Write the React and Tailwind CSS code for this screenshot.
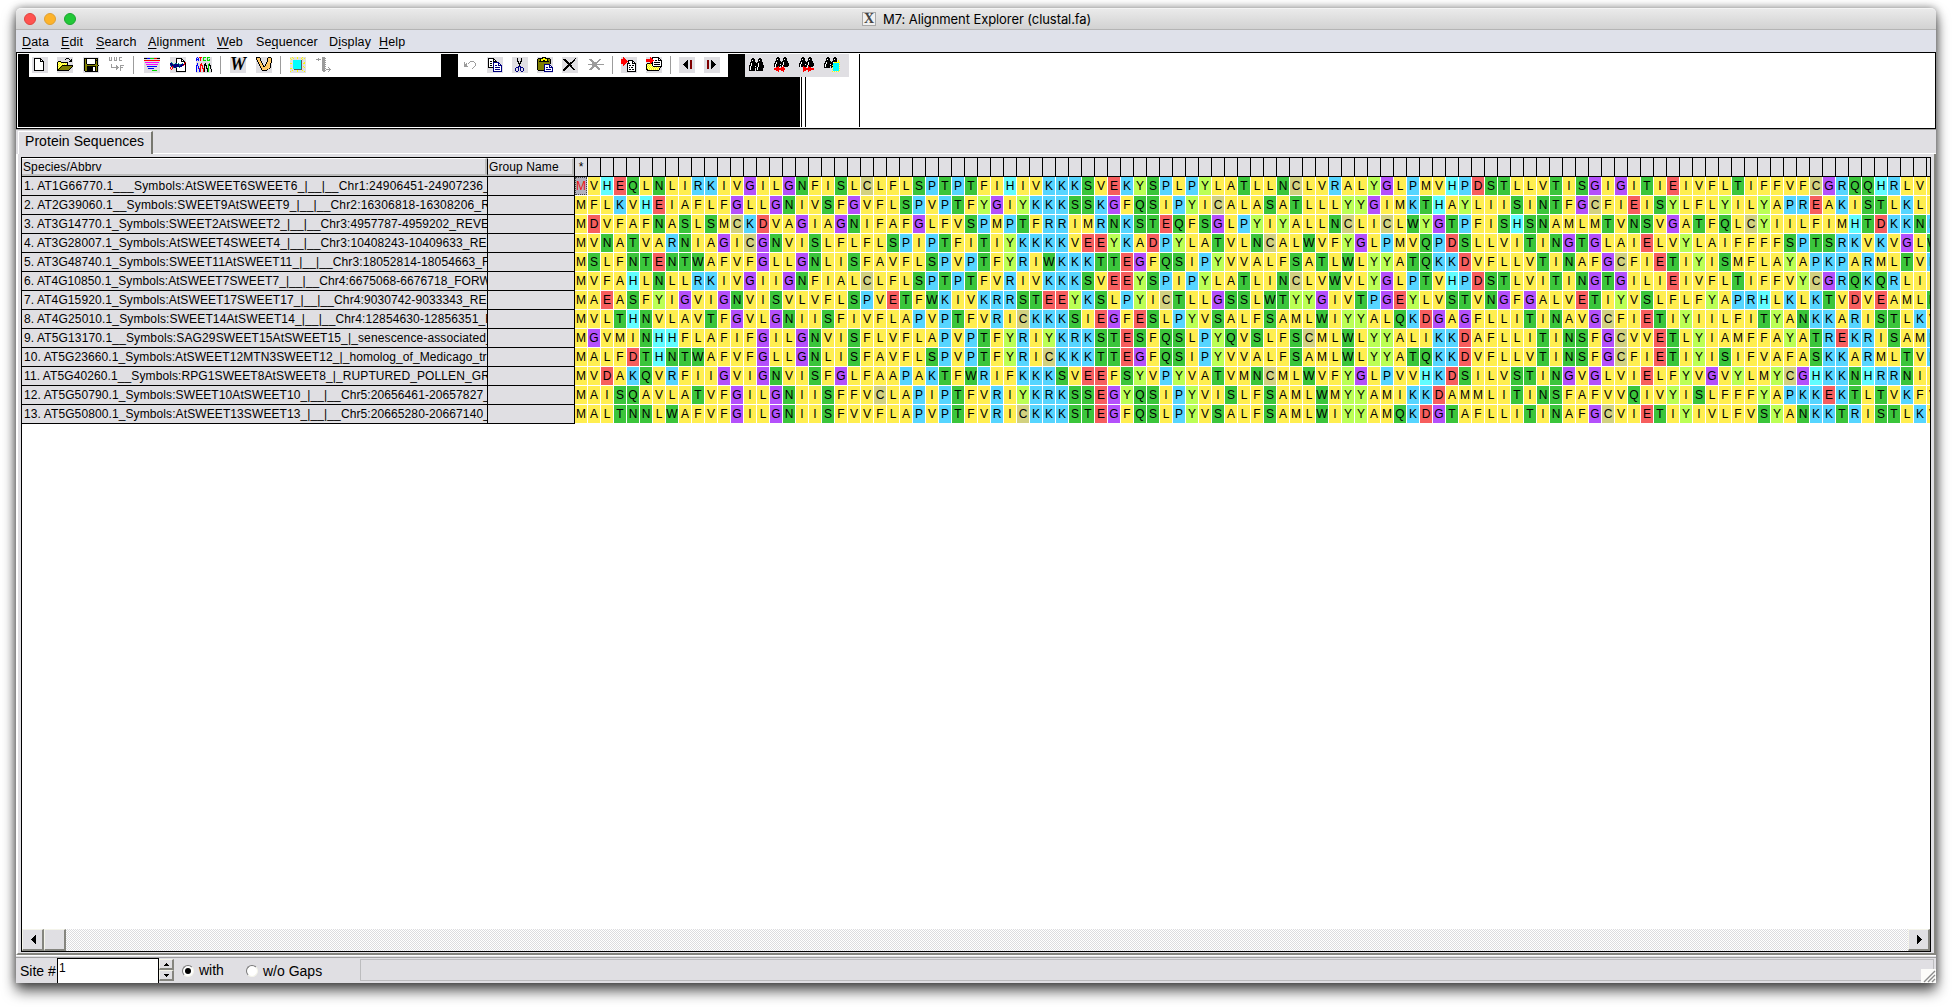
import React from "react";

const PALETTE = {
  k: "#000000", w: "#ffffff", r: "#ff0000", b: "#0000ff", n: "#000080", y: "#ffff00",
  o: "#808000", m: "#ff00ff", c: "#00ffff", g: "#00e000", s: "#9c9c9c", d: "#800000",
  f: "#ffc864", p: "#ffff90", t: "#008080", h: "#5a5a5a", l: "#c8c8c8",
};

const ICONS = {
  doc: ["", "..kkkkkkk", "..kwwwwwkk", "..kwwwwwkwk", "..kwwwwwkkkk", "..kwwwwwwwwk", "..kwwwwwwwwk", "..kwwwwwwwwk", "..kwwwwwwwwk", "..kwwwwwwwwk", "..kwwwwwwwwk", "..kwwwwwwwwk", "..kwwwwwwwwk", "..kkkkkkkkkk"],
  open: ["", ".........kkk", "........k...k.k", ".............kk", ".kkk........kkk", "kypykkkkkkk", "kpypypypypk", "kypypypypyk", "kpypykkkkkkkkkkk", "kypykooooooooook", "kpykooooooooook", "kykooooooooook", "kkooooooooook", "kkkkkkkkkkkk"],
  save: ["", ".kkkkkkkkkkkkkk", ".kokwwwwwwwwkok", ".kokwwwwwwwwkkk", ".kokwwwwwwwwkok", ".kokwwwwwwwwkok", ".kokwwwwwwwwkok", ".kookkkkkkkkook", ".koooooooooooook", ".kookkkkkkkkkok", ".kookkkkkkwwkok", ".kookkkkkkwwkok", ".kookkkkkkwwkok", ".kookkkkkkwwkok", "..kkkkkkkkkkkkk"],
  uuc: ["s.s..s.s..sss", "s.s..s.s..s", "s.s..s.s..s", "sss..sss..sss", "", "", "", "..s", "..s....s...ssss", "..s....ss..s", "..ssssssss.sss", ".......ss..s", ".......s...s", "...........s"],
  align: ["", "kkkbbbggggrrrkkk", "", "rrrrrrrrrrrrrrrr", "", ".mmmmmmmmmmmmmm", "", "..mmmmmmmmmmmm", "", "...bbbbbbbbbb", "", "....bbbbbb", "", "........ggggg"],
  muscle: ["", "......kkkkkk", "......kwwwwkk", "......kwwwwkwk", "......kwwwwkkkk", ".t....kwwwwwwwkr", "nnt..ttwtwwwtwrk", "nnntnnnnnttnnnrk", "tnnnnnnnntnnnrwk", ".nrnnnnnnnnnwwwk", "r.rtnntwwtwwwwwk", "r.r...kwwwwwwwwk", ".r....kwwwwwwwwk", "......kwwwwwwwwk", "......kkkkkkkkkk"],
  trace: [".b.rrr.ggg.ggg", "b.b.r..g...g", "bbb.r..g...g.g", "b.b.r..ggg.ggg", "", "", ".b...r...k...g", ".b..rr..kk..gk", "bb..rrr.kkk.gkk", "b.b.r.r.k.k.g.k", "b.b.r.r.k.k.g.k", "b.brr.rrk.kkg.k", "b..br..rk..kg..k", "b..br..rk..kg..k", "b..br..rk..kg..k"],
  arm: ["kkkk........kkk", "kfffk......kfffk", "kfffk......kfffk", ".kffk......kfffk", ".kfffk.....kfffk", "..kffk....kffffk", "..kfffk...kfffk", "...kffk..kffffk", "...kfffk.kffffk", "....kffkkfffffk", "....kfffffffffk", ".....kfffffffk", ".....kfffffk", "......kkkkk"],
  sun: ["..y....y....y", "y..y...y...y..y", ".y..........y", "...cccccccch", "...cccccccch", "...cccccccch..y", "yy.cccccccch.yy", "...cccccccch", "...cccccccch", "...cccccccch.y", "...cccccccch..y", "yy.cccccccch", "....hhhhhhhh", "..y....y....y", "y......y......y"],
  steps: ["......sss", "..s...ssss", "sssss.sss", "..s...ssss", "......sss", "......ssss", "......sss", "......ssss", "......sss", "......ssss", "......sss...s", "......ssss...s", "......sss.sssss", "......ssss...s", ".......ss...s"],
  undo: ["", "", "", "", "......ssss", "s....s....s", "s.s.s......s", "sss........s", "sss........s", "ssss......s", ".........s", "........s"],
  copy: ["", ".kkkkkk", ".kwwwwkk", ".kwwwwkwk", ".kwkkwkkkk", ".kwwwwnnnnnn", ".kwkkwnwwwwnn", ".kwwwwnwwwwnwn", ".kwkkwnwnnwnnnn", ".kwwwwnwwwwwwwn", ".kkkkknwnnnnnwn", "......nwwwwwwwn", "......nwnnnnnwn", "......nwwwwwwwn", "......nnnnnnnnn"],
  cut: ["", ".....k...k", ".....k...k", ".....k...k", ".....kk.kk", "......k.k", "......kkk", ".......k", ".......k", "......nnn", "....nnn.nnn", "...n..n.n..n", "...n..n.n..n", "...n..n.n..n", "....nn...nn"],
  paste: [".....kkkk", ".kkkkkyykkkkk", "kookyyyyyykook", "kookyykkyykook", "kokkkkkkkkkkok", "kooooooooooook", "kooooooooooook", "koooooonnnnnn", "koooooonwwwwnn", "koooooonwwwwnwn", "koooooonwnnwnnnn", "koooooonwwwwwwwn", "koooooonwnnnnnwn", ".kkkkkknwwwwwwwn", ".......nnnnnnnnn"],
  cross: ["", ".............k", ".kkk........k", "..kkk......kk", "...kkk....kk", "....kkk.kkk", ".....kkkkk", "......kkk", ".....kkkkk", "....kkk.kk", "...kkk...kk", "..kkk.....kk", ".kkk.......kk", ".kk"],
  crossOff: ["", "", ".sss.......ss", "..sss.....ss", "...sss...ss", "....ssssss", "....sssss", "ssssssssssssssss", "....sssss", "....ssssss", "...sss..sss", "..sss....sss", ".sss......ss"],
  insDoc: ["..r", "..rr", "rrrrr", "rrrrrr.kkkkk", "rrrrrrrkwwwkk", "rrrrrr.kwwwkwk", "rrrrr.kkkwwkkkk", "..rr..kwwwwwwwk", "..r...kwkkwkkwk", "......kwwwwwwwk", "......kwkwkkwwk", "......kwwwwwwwk", "......kwkkwkkwk", "......kwwwwwwwk", "......kkkkkkkkk"],
  insFolder: ["....r.kkkkkkk", "....rrkwwwwwkk", "rrrrrrrwwwwwkwk", "rrrrrrrrwkkwkkkk", "rrrrrrrwwwwwwwwk", "....rrkwkkkkkkwk", ".kkkrkkwwwwwwwwk", "kypyypkwkkkkkkwk", "kpypypkwwwwwwwwk", "kypypypkkkkkkkkk", "kpypypypypypypk", "kypypypypypypk", "kkpypypypypypk", ".kkkkkkkkkkkk"],
  prev: ["", "", "", "........k..dd", ".......kk..dd", "......kkk..dd", ".....kkkk..dd", "....kkkkk..dd", ".....kkkk..dd", "......kkk..dd", ".......kk..dd", "........k..dd"],
  next: ["", "", "", "...dd..k", "...dd..kk", "...dd..kkk", "...dd..kkkk", "...dd..kkkkk", "...dd..kkkk", "...dd..kkk", "...dd..kk", "...dd..k"],
  find: ["", "...kk.....kk", "..kkkk...kkkk", "..kwkk...kwkk", "..kkkk...kkkk", ".kkkkkk.kkkkkk", ".kwkkkkkkwkkkk", ".kwkkkkkkwkkkk", "kkwkkkkkkwkkkkk", "kwkkkkwkkwkkkkk", "kwkkkkkkwkkkkkk", "kwkkkk.kwkkkkk", "kwkkkk.kwkkkkk", "kkkkkk.kkkkkkk"],
  findPrev: ["...kk.....kk", "..kkkk...kkkk", "..kwkk...kwkk", "..kkkk...kkkk", ".kkkkkk.kkkkkk", ".kwkkkkkkwkkkk", "kkwkkkkkkwkkkkk", "kwkkkkwkkwkkkkk", "kwkkkkkkwkkkkkk", "kwkkrk.kwrkkkk", "..rrr..rrr", "rrrrrrrrrrr", "rrrrrrrrrrr", "..rrr..rrr", "....r....r"],
  findNext: ["...kk.....kk", "..kkkk...kkkk", "..kwkk...kwkk", "..kkkk...kkkk", ".kkkkkk.kkkkkk", ".kwkkkkkkwkkkk", "kkwkkkkkkwkkkkk", "kwkkkkwkkwkkkkk", "kwkkkkkkwkkkkkk", "kwkkrkkkwrkkkk", "....rrr..rrr", "....rrrrrrrrrrr", "....rrrrrrrrrrr", "....rrr..rrr", "....r....r"],
  findMark: ["...kk.....kk", "..kkkk...kkkk", "..kwkk...kwkk", "..kkkk...kkkk.y", ".kkkkkk.kkkkk.y", ".kwkkkkkkwyyyyyy", "kkwkkkkkkcccccc", "kwkkkkwkkccccccy", "kwkkkkkkycccccc", "kwkkkk.kkccccccy", "kkkkkk.kycccccc", ".........ccccccy", "........ycccccc", ".........ccccccy", "........y.y.y.y"],
};

function PixelIcon({ name }) {
  return (
    <svg width="16" height="16" viewBox="0 0 16 16" shapeRendering="crispEdges" className="block shrink-0">
      {ICONS[name].flatMap((row, y) =>
        [...row].map((ch, x) =>
          PALETTE[ch] ? <rect key={x + "-" + y} x={x} y={y} width="1" height="1" fill={PALETTE[ch]} /> : null
        )
      )}
    </svg>
  );
}

function Tool({ name, flat, className = "" }) {
  return (
    <div className={"h-4 w-4 shrink-0 " + (flat ? "" : "bg-[#e0dfe3] ") + className}>
      {name === "web" ? (
        <div className="-mx-1 text-center font-['Liberation_Serif',serif] text-[18px] leading-[15px] font-bold italic">W</div>
      ) : (
        <PixelIcon name={name} />
      )}
    </div>
  );
}

const Sep = ({ className }) => <div className={"-mt-px h-[18px] w-px shrink-0 bg-[#9c9c9c] " + className} />;

const RESIDUE = {
  A: "bg-[#ffee50]", F: "bg-[#ffee50]", I: "bg-[#ffee50]", L: "bg-[#ffee50]", M: "bg-[#ffee50]", V: "bg-[#ffee50]",
  N: "bg-[#3bc53b]", Q: "bg-[#3bc53b]", S: "bg-[#3bc53b]", T: "bg-[#3bc53b]", W: "bg-[#3bc53b]",
  K: "bg-[#56d5ff]", R: "bg-[#56d5ff]", P: "bg-[#56d5ff]",
  D: "bg-[#f65e5e]", E: "bg-[#f65e5e]",
  G: "bg-[#b450fb]", H: "bg-[#62fdff]", Y: "bg-[#bbff55]", C: "bg-[#d2d180]",
};

const ROWS = [
  ["1. AT1G66770.1___Symbols:AtSWEET6SWEET6_|__|__Chr1:24906451-24907236_F", "tracking-[0.2px]", "MVHEQLNLIRKIVGILGNFISLCLFLSPTPTFIHI", "VKKKSVEKYSPLPYLATLLNCLVRALYGLPMVHPD", "STLLVTISGIGITIEIVFLTIFFVFCGRQQHRLVI"],
  ["2. AT2G39060.1__Symbols:SWEET9AtSWEET9_|__|__Chr2:16306818-16308206_R", "tracking-[0.17px]", "MFLKVHEIAFLFGLLGNIVSFGVFLSPVPTFYGIY", "KKKSSKGFQSIPYICALASATLLLYYGIMKTHAYL", "IISINTFGCFIEISYLFLYILYAPREAKISTLKLI"],
  ["3. AT3G14770.1_Symbols:SWEET2AtSWEET2_|__|__Chr3:4957787-4959202_REVE", "tracking-[0.1px]", "MDVFAFNASLSMCKDVAGIAGNIFAFGLFVSPMPT", "FRRIMRNKSTEQFSGLPYIYALLNCLICLWYGTPF", "ISHSNAMLMTVNSVGATFQLCYIILFIMHTDKKNK"],
  ["4. AT3G28007.1_Symbols:AtSWEET4SWEET4_|__|__Chr3:10408243-10409633_RE", "tracking-[0.1px]", "MVNATVARNIAGICGNVISLFLFLSPIPTFITIYK", "KKKVEEYKADPYLATVLNCALWVFYGLPMVQPDSL", "LVITINGTGLAIELVYLAIFFFFSPTSRKVKVGLW"],
  ["5. AT3G48740.1_Symbols:SWEET11AtSWEET11_|__|__Chr3:18052814-18054663_F", "tracking-[0.11px]", "MSLFNTENTWAFVFGLLGNLISFAVFLSPVPTFYR", "IWKKKTTEGFQSIPYVVALFSATLWLYYATQKKDV", "FLLVTINAFGCFIETIYISMFLAYAPKPARMLTVK"],
  ["6. AT4G10850.1_Symbols:AtSWEET7SWEET7_|__|__Chr4:6675068-6676718_FORW", "tracking-[0.07px]", "MVFAHLNLLRKIVGIIGNFIALCLFLSPTPTFVRI", "VKKKSVEEYSPIPYLATLINCLVWVLYGLPTVHPD", "STLVITINGTGILIEIVFLTIFFVYCGRQKQRLII"],
  ["7. AT4G15920.1_Symbols:AtSWEET17SWEET17_|__|__Chr4:9030742-9033343_RE", "tracking-[0.1px]", "MAEASFYIGVIGNVISVLVFLSPVETFWKIVKRRS", "TEEYKSLPYICTLLGSSLWTYYGIVTPGEYLVSTV", "NGFGALVETIYVSLFLFYAPRHLKLKTVDVEAMLN"],
  ["8. AT4G25010.1_Symbols:SWEET14AtSWEET14_|__|__Chr4:12854630-12856351_R", "tracking-[0.13px]", "MVLTHNVLAVTFGVLGNIISFIVFLAPVPTFVRIC", "KKKSIEGFESLPYVSALFSAMLWIYYALQKDGAGF", "LLITINAVGCFIETIYIILFITYANKKARISTLKV"],
  ["9. AT5G13170.1__Symbols:SAG29SWEET15AtSWEET15_|_senescence-associated_", "tracking-[0.13px]", "MGVMINHHFLAFIFGILGNVISFLVFLAPVPTFYR", "IYKRKSTESFQSLPYQVSLFSCMLWLYYALIKKDA", "FLLITINSFGCVVETLYIAMFFAYATREKRISAMK"],
  ["10. AT5G23660.1_Symbols:AtSWEET12MTN3SWEET12_|_homolog_of_Medicago_tr", "tracking-[0.08px]", "MALFDTHNTWAFVFGLLGNLISFAVFLSPVPTFYR", "ICKKKTTEGFQSIPYVVALFSAMLWLYYATQKKDV", "FLLVTINSFGCFIETIYISIFVAFASKKARMLTVK"],
  ["11. AT5G40260.1__Symbols:RPG1SWEET8AtSWEET8_|_RUPTURED_POLLEN_GR", "tracking-[0.1px]", "MVDAKQVRFIIGVIGNVISFGLFAAPAKTFWRIFK", "KKSVEEFSYVPYVATVMNCMLWVFYGLPVVHKDSI", "LVSTINGVGLVIELFYVGVYLMYCGHKKNHRRNII"],
  ["12. AT5G50790.1_Symbols:SWEET10AtSWEET10_|__|__Chr5:20656461-20657827_", "tracking-[0.1px]", "MAISQAVLATVFGILGNIISFFVCLAPIPTFVRIY", "KRKSSEGYQSIPYVISLFSAMLWMYYAMIKKDAMM", "LITINSFAFVVQIVYISLFFFYAPKKEKTLTVKFV"],
  ["13. AT5G50800.1_Symbols:AtSWEET13SWEET13_|__|__Chr5:20665280-20667140_", "tracking-[0.1px]", "MALTNNLWAFVFGILGNIISFVVFLAPVPTFVRIC", "KKKSTEGFQSLPYVSALFSAMLWIYYAMQKDGTAF", "LLITINAFGCVIETIYIVLFVSYANKKTRISTLKV"],
];

const MENU = [
  ["", "D", "ata", "w-[39px]"], ["", "E", "dit", "w-[35px]"], ["", "S", "earch", "w-[52px]"], ["", "A", "lignment", "w-[69px]"],
  ["", "W", "eb", "w-[39px]"], ["Se", "q", "uencer", "w-[73px]"], ["D", "i", "splay", "w-[50px]"], ["", "H", "elp", "w-[40px]"],
];

function TitleBar() {
  return (
    <div className="flex h-[22px] shrink-0 items-center rounded-t-[5px] border-t border-[#f4f4f4] border-b border-b-[#b4b4b4] bg-linear-to-b from-[#eaeaea] to-[#d2d2d2] pl-2">
      <div className="flex w-[838px] gap-2">
        <span className="size-3 rounded-full border border-[#e0443e] bg-[#ff5350]" />
        <span className="size-3 rounded-full border border-[#dea033] bg-[#fdb32a]" />
        <span className="size-3 rounded-full border border-[#1ba52f] bg-[#22c837]" />
      </div>
      <div className="flex size-[14px] items-center justify-center border border-[#a8a8a8] bg-[#f0f0f0] font-['Liberation_Serif',serif] text-[14px] leading-none font-bold text-[#444]">X</div>
      <div className="ml-[7px] font-[Inter,sans-serif] text-[13px] leading-5 whitespace-nowrap text-black">
        <span className="tracking-[-0.08px]">M7: Alignment Explorer (clustal.fa)</span>
      </div>
    </div>
  );
}

function MenuBar() {
  return (
    <div className="flex h-[22px] shrink-0 bg-[#dfe1ea] pl-[6px] text-[12.5px] leading-[24px]">
      {MENU.map(([a, u, b, w]) => (
        <div key={u + b} className={"shrink-0 tracking-[0.15px] " + w}>
          {a}<span className="underline underline-offset-2">{u}</span>{b}
        </div>
      ))}
    </div>
  );
}

function Toolbars() {
  return (
    <div className="flex h-[77px] shrink-0 border border-black bg-white">
      <div className="my-px ml-px flex w-[782px] shrink-0 items-start bg-black">
        <div className="ml-[11px] flex h-[23px] w-[412px] shrink-0 items-start bg-white pt-[3px] pl-[3px]">
          <Tool name="doc" />
          <Tool name="open" className="ml-[9px]" />
          <Tool name="save" className="ml-[10px]" />
          <Tool name="uuc" flat className="ml-[10px]" />
          <Sep className="ml-[8px]" />
          <Tool name="align" className="ml-[10px]" />
          <Tool name="muscle" className="ml-[10px]" />
          <Tool name="trace" className="ml-[10px]" />
          <Sep className="ml-[8px]" />
          <Tool name="web" className="ml-[9px]" />
          <Tool name="arm" className="ml-[10px]" />
          <Sep className="ml-[8px]" />
          <Tool name="sun" className="ml-[9px]" />
          <Tool name="steps" flat className="ml-[10px]" />
        </div>
        <div className="ml-[17px] flex h-[23px] w-[270px] shrink-0 items-start bg-white pt-[3px] pl-[6px]">
          <Tool name="undo" flat />
          <Tool name="copy" className="ml-[7px]" />
          <Tool name="cut" className="ml-[9px]" />
          <Tool name="paste" className="ml-[9px]" />
          <Tool name="cross" className="ml-[9px]" />
          <Tool name="crossOff" flat className="ml-[10px]" />
          <Sep className="ml-[8px]" />
          <Tool name="insDoc" className="ml-[8px]" />
          <Tool name="insFolder" className="ml-[9px]" />
          <Sep className="ml-[8px]" />
          <Tool name="prev" className="ml-[8px]" />
          <Tool name="next" className="ml-[9px]" />
        </div>
        <div className="relative z-10 ml-[17px] flex h-[23px] w-[104px] shrink-0 items-start bg-[#e0dfe3] pt-[3px] pl-1">
          <Tool name="find" />
          <Tool name="findPrev" className="ml-[9px]" />
          <Tool name="findNext" className="ml-[9px]" />
          <Tool name="findMark" className="ml-[9px]" />
        </div>
      </div>
      <div className="my-px ml-px w-px shrink-0 bg-black" />
      <div className="my-px ml-[3px] w-px shrink-0 bg-black" />
      <div className="my-px ml-[53px] w-px shrink-0 bg-black" />
    </div>
  );
}

function Grid() {
  return (
    <div className="flex min-h-0 flex-1 flex-col border border-black bg-white">
      <div className="flex h-[19px] shrink-0 border-b border-black bg-[#e0dfe3] text-[12px] leading-[18px]">
        <div className="w-[465px] shrink-0 border-t border-r-2 border-b-2 border-t-white border-r-[#bdbdbd] border-b-[#bdbdbd] pl-px leading-4 tracking-[0.1px]">Species/Abbrv</div>
        <div className="w-[87px] shrink-0 border-t border-r-2 border-b-2 border-l border-t-white border-r-[#bdbdbd] border-b-[#bdbdbd] border-l-black pl-px leading-4 whitespace-nowrap tracking-[0.1px]">Group Name</div>
        <div className="flex min-w-0 flex-1 overflow-hidden">
          {Array.from({ length: 105 }, (_, i) => (
            <div key={i} className="w-[13px] shrink-0 border-l border-black text-center leading-[19px]">{i === 0 ? "*" : ""}</div>
          ))}
        </div>
      </div>
      <div className="flex min-h-0 flex-1 flex-col">
        {ROWS.map(([name, tracking, ...parts], r) => (
          <div key={name} className="flex h-[19px] shrink-0 text-[12px] leading-[18px]">
            <div className={"w-[465px] shrink-0 overflow-hidden border-b border-black bg-[#e0dfe3] pl-[2px] whitespace-nowrap " + tracking}>{name}</div>
            <div className="w-[88px] shrink-0 border-x border-b border-black bg-[#e0dfe3]" />
            <div className="flex min-w-0 flex-1 overflow-hidden">
              {[...parts.join("")].map((ch, c) =>
                r === 0 && c === 0 ? (
                  <div key={c} className="mr-px h-[18px] w-3 shrink-0 border border-dotted border-[#444] bg-[#b1b0bd] text-center leading-4 text-[#f01010]"><span className="-mx-1">{ch}</span></div>
                ) : (
                  <div key={c} className={"mr-px h-[18px] w-3 shrink-0 text-center " + RESIDUE[ch]}><span className="-mx-1">{ch}</span></div>
                )
              )}
            </div>
          </div>
        ))}
      </div>
      <div className="flex h-[22px] shrink-0 bg-[conic-gradient(#dcdcdf_25%,#fff_0_50%,#dcdcdf_0_75%,#fff_0)] bg-[length:2px_2px]">
        <ScrollButton><path d="M13 5v9l-5-4.5z" /></ScrollButton>
        <div className="h-[22px] w-[22px] border border-r-2 border-b-2 border-[#f4f4ea] border-r-[#85857f] border-b-[#85857f] bg-[#e0dfe3]" />
        <div className="flex-1" />
        <ScrollButton><path d="M8 5v9l5-4.5z" /></ScrollButton>
      </div>
    </div>
  );
}

function ScrollButton({ children }) {
  return (
    <div className="h-[22px] w-[22px] border border-r-2 border-b-2 border-[#f4f4ea] border-r-[#85857f] border-b-[#85857f] bg-[#e0dfe3]">
      <svg width="19" height="19" shapeRendering="crispEdges">{children}</svg>
    </div>
  );
}

function Radio({ on }) {
  return (
    <div className="flex size-3 shrink-0 items-center justify-center rounded-full border border-[#f4f4ea] border-t-[#777] border-l-[#777] bg-white">
      {on && <div className="size-[6px] rounded-full bg-black" />}
    </div>
  );
}

function Spin({ d }) {
  return (
    <div className="flex h-[11px] w-[15px] items-center justify-center border border-r-2 border-b-2 border-[#f4f4ea] border-r-[#85857f] border-b-[#85857f] bg-[#e0dfe3]">
      <svg width="5" height="3" shapeRendering="crispEdges"><path d={d} /></svg>
    </div>
  );
}

function StatusBar() {
  return (
    <div className="relative flex h-[25px] shrink-0 bg-[#e0dfe3] text-[14px]">
      <div className="w-[41px] shrink-0 pl-1 leading-[26px] whitespace-nowrap">Site #</div>
      <div className="w-[102px] shrink-0 border border-b-0 border-black bg-white pl-px text-[12px] leading-[18px]">1</div>
      <div className="mt-px w-[15px] shrink-0"><Spin d="M2 0h1v1h1v1h1v1h-5v-1h1v-1h1z" /><Spin d="M0 0h5v1h-1v1h-1v1h-1v-1h-1v-1h-1z" /></div>
      <div className="flex w-[186px] shrink-0 items-center pl-2">
        <Radio on /><span className="ml-[5px] w-[47px]">with</span>
        <Radio /><span className="ml-[5px] leading-6 whitespace-nowrap">w/o Gaps</span>
      </div>
      <div className="mt-px mr-[2px] mb-[2px] flex-1 border border-[#bcbcbe]" />
      <svg width="15" height="14" className="absolute right-0 bottom-0 bg-[#fcfcfa]" fill="none" stroke="#8c8c8c">
        <path d="M3 13L14 2M7 13l7-7M11 13l3-3" strokeWidth="1.4" />
      </svg>
    </div>
  );
}

export default function App() {
  return (
    <div className="h-[1007px] w-[1952px] overflow-hidden bg-white px-4 pt-2 font-['Liberation_Sans',Arial,sans-serif] text-black">
      <div className="flex h-[975px] w-[1920px] flex-col rounded-t-[5px] bg-[#e0dfe3] shadow-[0_8px_14px_rgba(0,0,0,0.65),0_0_9px_rgba(0,0,0,0.45)]">
        <TitleBar />
        <MenuBar />
        <Toolbars />
        <div className="flex min-h-0 flex-1 flex-col border-t border-[#a0a0a0]">
          <div className="flex h-[24px] shrink-0">
            <div className="mt-px ml-[2px] h-[23px] w-[135px] shrink-0 border-t border-r-2 border-l border-white border-r-[#77776f] pl-[6px] text-[14px] leading-[19px] tracking-[0.05px] whitespace-nowrap">Protein Sequences</div>
            <div className="flex-1 border-b border-white" />
          </div>
          <div className="flex min-h-0 flex-1 flex-col border-r-2 border-b-2 border-l-2 border-[#85857f] border-l-white px-[3px] pt-[3px] pb-px">
            <Grid />
          </div>
          <div className="h-[3px] shrink-0 border-t border-b border-t-white border-b-[#a0a0a0] bg-[#e0dfe3]" />
        </div>
        <StatusBar />
      </div>
    </div>
  );
}
